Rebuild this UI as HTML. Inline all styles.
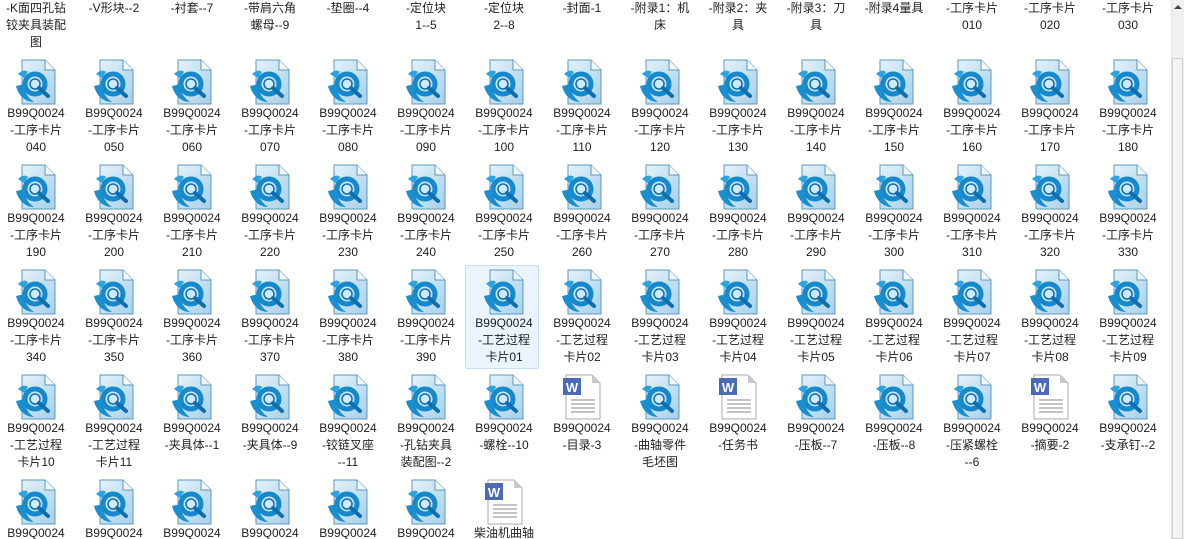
<!DOCTYPE html>
<html><head><meta charset="utf-8">
<style>
html,body{margin:0;padding:0;width:1184px;height:539px;overflow:hidden;background:#fff;}
body{position:relative;font-family:"Liberation Sans","Noto Sans CJK SC",sans-serif;font-size:12px;color:#1e1e1e;}
.c{position:absolute;width:74px;height:104px;}
.c svg{position:absolute;left:13px;top:0;width:48px;height:48px;}
.t{position:absolute;left:-4px;width:82px;top:47px;text-align:center;line-height:17px;white-space:nowrap;}
.sel{background:#eaf4fc;border:1px solid #c8def2;box-sizing:border-box;border-radius:2px;}
.sb{position:absolute;left:1171px;top:0;width:13px;height:539px;background:#f0f0f0;border-left:1px solid #e4e4e4;}
.th{position:absolute;left:1172px;top:58px;width:11px;height:481px;background:#f4f4f4;border:1px solid #cfcfcf;box-sizing:border-box;}
</style></head><body>
<svg width="0" height="0" style="position:absolute">
<defs>
<linearGradient id="g" x1="0" y1="0" x2="1" y2="1"><stop offset="0" stop-color="#e4f2fa"/><stop offset="1" stop-color="#a6d0ea"/></linearGradient>
<symbol id="ca" viewBox="0 0 48 48">
<path d="M10 2H33L43 12V46H10Z" fill="url(#g)" stroke="#5f97bd"/>
<path d="M33 2V12H43" fill="#f2f8fc" stroke="#5f97bd"/>
<circle cx="23" cy="26" r="10" fill="none" stroke="#1689cc" stroke-width="5"/>
<circle cx="23" cy="26" r="5" fill="#cfeaf8" stroke="#0f6fae" stroke-width="1.5"/>
<path d="M27 30L36 38" stroke="#0f6fae" stroke-width="4" stroke-linecap="round"/>
<path d="M4 28C6 36 12 44 22 44C16 40 12 34 13 26Z" fill="#1a8fd0"/>
<path d="M6 16C10 12 14 12 16 14L12 20Z" fill="#2aa3e0"/>
</symbol>
<symbol id="wd" viewBox="0 0 48 48">
<path d="M8 2H34L42 10V46H8Z" fill="#fff" stroke="#a8a8a8"/>
<path d="M34 2V10H42Z" fill="#c8c8c8"/>
<rect x="5" y="5" width="18" height="17" fill="#4b6bb5"/>
<text x="14" y="19" font-family="Liberation Sans" font-size="13" font-weight="bold" fill="#fff" text-anchor="middle">W</text>
<path d="M13 27H37M13 31H37M13 35H37M13 39H37" stroke="#b0b0b0" stroke-width="1.5"/>
</symbol>
</defs></svg>

<!-- Row 0 -->
<div class="c" style="left:-1px;top:-47px"><div class="t">-K面四孔钻<br>铰夹具装配<br>图</div></div>
<div class="c" style="left:77px;top:-47px"><div class="t">-V形块--2</div></div>
<div class="c" style="left:155px;top:-47px"><div class="t">-衬套--7</div></div>
<div class="c" style="left:233px;top:-47px"><div class="t">-带肩六角<br>螺母--9</div></div>
<div class="c" style="left:311px;top:-47px"><div class="t">-垫圈--4</div></div>
<div class="c" style="left:389px;top:-47px"><div class="t">-定位块<br>1--5</div></div>
<div class="c" style="left:467px;top:-47px"><div class="t">-定位块<br>2--8</div></div>
<div class="c" style="left:545px;top:-47px"><div class="t">-封面-1</div></div>
<div class="c" style="left:623px;top:-47px"><div class="t">-附录1：机<br>床</div></div>
<div class="c" style="left:701px;top:-47px"><div class="t">-附录2：夹<br>具</div></div>
<div class="c" style="left:779px;top:-47px"><div class="t">-附录3：刀<br>具</div></div>
<div class="c" style="left:857px;top:-47px"><div class="t">-附录4量具</div></div>
<div class="c" style="left:935px;top:-47px"><div class="t">-工序卡片<br>010</div></div>
<div class="c" style="left:1013px;top:-47px"><div class="t">-工序卡片<br>020</div></div>
<div class="c" style="left:1091px;top:-47px"><div class="t">-工序卡片<br>030</div></div>

<!-- Row 1 -->
<div class="c" style="left:-1px;top:58px"><svg><use href="#ca"/></svg><div class="t">B99Q0024<br>-工序卡片<br>040</div></div>
<div class="c" style="left:77px;top:58px"><svg><use href="#ca"/></svg><div class="t">B99Q0024<br>-工序卡片<br>050</div></div>
<div class="c" style="left:155px;top:58px"><svg><use href="#ca"/></svg><div class="t">B99Q0024<br>-工序卡片<br>060</div></div>
<div class="c" style="left:233px;top:58px"><svg><use href="#ca"/></svg><div class="t">B99Q0024<br>-工序卡片<br>070</div></div>
<div class="c" style="left:311px;top:58px"><svg><use href="#ca"/></svg><div class="t">B99Q0024<br>-工序卡片<br>080</div></div>
<div class="c" style="left:389px;top:58px"><svg><use href="#ca"/></svg><div class="t">B99Q0024<br>-工序卡片<br>090</div></div>
<div class="c" style="left:467px;top:58px"><svg><use href="#ca"/></svg><div class="t">B99Q0024<br>-工序卡片<br>100</div></div>
<div class="c" style="left:545px;top:58px"><svg><use href="#ca"/></svg><div class="t">B99Q0024<br>-工序卡片<br>110</div></div>
<div class="c" style="left:623px;top:58px"><svg><use href="#ca"/></svg><div class="t">B99Q0024<br>-工序卡片<br>120</div></div>
<div class="c" style="left:701px;top:58px"><svg><use href="#ca"/></svg><div class="t">B99Q0024<br>-工序卡片<br>130</div></div>
<div class="c" style="left:779px;top:58px"><svg><use href="#ca"/></svg><div class="t">B99Q0024<br>-工序卡片<br>140</div></div>
<div class="c" style="left:857px;top:58px"><svg><use href="#ca"/></svg><div class="t">B99Q0024<br>-工序卡片<br>150</div></div>
<div class="c" style="left:935px;top:58px"><svg><use href="#ca"/></svg><div class="t">B99Q0024<br>-工序卡片<br>160</div></div>
<div class="c" style="left:1013px;top:58px"><svg><use href="#ca"/></svg><div class="t">B99Q0024<br>-工序卡片<br>170</div></div>
<div class="c" style="left:1091px;top:58px"><svg><use href="#ca"/></svg><div class="t">B99Q0024<br>-工序卡片<br>180</div></div>

<!-- Row 2 -->
<div class="c" style="left:-1px;top:163px"><svg><use href="#ca"/></svg><div class="t">B99Q0024<br>-工序卡片<br>190</div></div>
<div class="c" style="left:77px;top:163px"><svg><use href="#ca"/></svg><div class="t">B99Q0024<br>-工序卡片<br>200</div></div>
<div class="c" style="left:155px;top:163px"><svg><use href="#ca"/></svg><div class="t">B99Q0024<br>-工序卡片<br>210</div></div>
<div class="c" style="left:233px;top:163px"><svg><use href="#ca"/></svg><div class="t">B99Q0024<br>-工序卡片<br>220</div></div>
<div class="c" style="left:311px;top:163px"><svg><use href="#ca"/></svg><div class="t">B99Q0024<br>-工序卡片<br>230</div></div>
<div class="c" style="left:389px;top:163px"><svg><use href="#ca"/></svg><div class="t">B99Q0024<br>-工序卡片<br>240</div></div>
<div class="c" style="left:467px;top:163px"><svg><use href="#ca"/></svg><div class="t">B99Q0024<br>-工序卡片<br>250</div></div>
<div class="c" style="left:545px;top:163px"><svg><use href="#ca"/></svg><div class="t">B99Q0024<br>-工序卡片<br>260</div></div>
<div class="c" style="left:623px;top:163px"><svg><use href="#ca"/></svg><div class="t">B99Q0024<br>-工序卡片<br>270</div></div>
<div class="c" style="left:701px;top:163px"><svg><use href="#ca"/></svg><div class="t">B99Q0024<br>-工序卡片<br>280</div></div>
<div class="c" style="left:779px;top:163px"><svg><use href="#ca"/></svg><div class="t">B99Q0024<br>-工序卡片<br>290</div></div>
<div class="c" style="left:857px;top:163px"><svg><use href="#ca"/></svg><div class="t">B99Q0024<br>-工序卡片<br>300</div></div>
<div class="c" style="left:935px;top:163px"><svg><use href="#ca"/></svg><div class="t">B99Q0024<br>-工序卡片<br>310</div></div>
<div class="c" style="left:1013px;top:163px"><svg><use href="#ca"/></svg><div class="t">B99Q0024<br>-工序卡片<br>320</div></div>
<div class="c" style="left:1091px;top:163px"><svg><use href="#ca"/></svg><div class="t">B99Q0024<br>-工序卡片<br>330</div></div>

<!-- Row 3 -->
<div class="c" style="left:-1px;top:268px"><svg><use href="#ca"/></svg><div class="t">B99Q0024<br>-工序卡片<br>340</div></div>
<div class="c" style="left:77px;top:268px"><svg><use href="#ca"/></svg><div class="t">B99Q0024<br>-工序卡片<br>350</div></div>
<div class="c" style="left:155px;top:268px"><svg><use href="#ca"/></svg><div class="t">B99Q0024<br>-工序卡片<br>360</div></div>
<div class="c" style="left:233px;top:268px"><svg><use href="#ca"/></svg><div class="t">B99Q0024<br>-工序卡片<br>370</div></div>
<div class="c" style="left:311px;top:268px"><svg><use href="#ca"/></svg><div class="t">B99Q0024<br>-工序卡片<br>380</div></div>
<div class="c" style="left:389px;top:268px"><svg><use href="#ca"/></svg><div class="t">B99Q0024<br>-工序卡片<br>390</div></div>
<div class="c sel" style="left:465px;top:265px;height:104px"></div>
<div class="c" style="left:467px;top:268px"><svg><use href="#ca"/></svg><div class="t">B99Q0024<br>-工艺过程<br>卡片01</div></div>
<div class="c" style="left:545px;top:268px"><svg><use href="#ca"/></svg><div class="t">B99Q0024<br>-工艺过程<br>卡片02</div></div>
<div class="c" style="left:623px;top:268px"><svg><use href="#ca"/></svg><div class="t">B99Q0024<br>-工艺过程<br>卡片03</div></div>
<div class="c" style="left:701px;top:268px"><svg><use href="#ca"/></svg><div class="t">B99Q0024<br>-工艺过程<br>卡片04</div></div>
<div class="c" style="left:779px;top:268px"><svg><use href="#ca"/></svg><div class="t">B99Q0024<br>-工艺过程<br>卡片05</div></div>
<div class="c" style="left:857px;top:268px"><svg><use href="#ca"/></svg><div class="t">B99Q0024<br>-工艺过程<br>卡片06</div></div>
<div class="c" style="left:935px;top:268px"><svg><use href="#ca"/></svg><div class="t">B99Q0024<br>-工艺过程<br>卡片07</div></div>
<div class="c" style="left:1013px;top:268px"><svg><use href="#ca"/></svg><div class="t">B99Q0024<br>-工艺过程<br>卡片08</div></div>
<div class="c" style="left:1091px;top:268px"><svg><use href="#ca"/></svg><div class="t">B99Q0024<br>-工艺过程<br>卡片09</div></div>

<!-- Row 4 -->
<div class="c" style="left:-1px;top:373px"><svg><use href="#ca"/></svg><div class="t">B99Q0024<br>-工艺过程<br>卡片10</div></div>
<div class="c" style="left:77px;top:373px"><svg><use href="#ca"/></svg><div class="t">B99Q0024<br>-工艺过程<br>卡片11</div></div>
<div class="c" style="left:155px;top:373px"><svg><use href="#ca"/></svg><div class="t">B99Q0024<br>-夹具体--1</div></div>
<div class="c" style="left:233px;top:373px"><svg><use href="#ca"/></svg><div class="t">B99Q0024<br>-夹具体--9</div></div>
<div class="c" style="left:311px;top:373px"><svg><use href="#ca"/></svg><div class="t">B99Q0024<br>-铰链叉座<br>--11</div></div>
<div class="c" style="left:389px;top:373px"><svg><use href="#ca"/></svg><div class="t">B99Q0024<br>-孔钻夹具<br>装配图--2</div></div>
<div class="c" style="left:467px;top:373px"><svg><use href="#ca"/></svg><div class="t">B99Q0024<br>-螺栓--10</div></div>
<div class="c" style="left:545px;top:373px"><svg><use href="#wd"/></svg><div class="t">B99Q0024<br>-目录-3</div></div>
<div class="c" style="left:623px;top:373px"><svg><use href="#ca"/></svg><div class="t">B99Q0024<br>-曲轴零件<br>毛坯图</div></div>
<div class="c" style="left:701px;top:373px"><svg><use href="#wd"/></svg><div class="t">B99Q0024<br>-任务书</div></div>
<div class="c" style="left:779px;top:373px"><svg><use href="#ca"/></svg><div class="t">B99Q0024<br>-压板--7</div></div>
<div class="c" style="left:857px;top:373px"><svg><use href="#ca"/></svg><div class="t">B99Q0024<br>-压板--8</div></div>
<div class="c" style="left:935px;top:373px"><svg><use href="#ca"/></svg><div class="t">B99Q0024<br>-压紧螺栓<br>--6</div></div>
<div class="c" style="left:1013px;top:373px"><svg><use href="#wd"/></svg><div class="t">B99Q0024<br>-摘要-2</div></div>
<div class="c" style="left:1091px;top:373px"><svg><use href="#ca"/></svg><div class="t">B99Q0024<br>-支承钉--2</div></div>

<!-- Row 5 -->
<div class="c" style="left:-1px;top:478px"><svg><use href="#ca"/></svg><div class="t">B99Q0024</div></div>
<div class="c" style="left:77px;top:478px"><svg><use href="#ca"/></svg><div class="t">B99Q0024</div></div>
<div class="c" style="left:155px;top:478px"><svg><use href="#ca"/></svg><div class="t">B99Q0024</div></div>
<div class="c" style="left:233px;top:478px"><svg><use href="#ca"/></svg><div class="t">B99Q0024</div></div>
<div class="c" style="left:311px;top:478px"><svg><use href="#ca"/></svg><div class="t">B99Q0024</div></div>
<div class="c" style="left:389px;top:478px"><svg><use href="#ca"/></svg><div class="t">B99Q0024</div></div>
<div class="c" style="left:467px;top:478px"><svg><use href="#wd"/></svg><div class="t">柴油机曲轴</div></div>

<div class="sb"></div>
<div class="th"></div>
<svg style="position:absolute;left:1173px;top:3px" width="10" height="8"><path d="M1 6L5 2L9 6Z" fill="#444"/></svg>
</body></html>
